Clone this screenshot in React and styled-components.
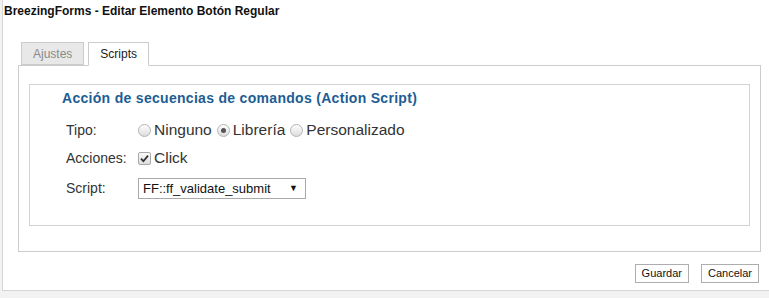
import React from 'react';
import styled, { createGlobalStyle } from 'styled-components';

const GlobalStyle = createGlobalStyle`
    html, body {
        margin: 0;
        padding: 0;
        background-color: #f2f2f2;
        font-family: "Liberation Sans", Arial, sans-serif;
    }
`

const Frame = styled.div`
    margin-left: 2px;
    height: 291px;
    box-sizing: border-box;
    background-color: #ffffff;
    border-left: 1px solid #d6d6d6;
    border-bottom: 1px solid #d6d6d6;
    overflow: hidden;
`

const Title = styled.h1`
    margin: 0;
    padding: 4px 0 0 1px;
    font-size: 12px;
    line-height: 14px;
    font-weight: bold;
    color: #111111;
`

const Body = styled.div`
    padding: 0 8px 0 15px;
`

const TabBar = styled.div`
    display: flex;
    gap: 4px;
    margin: 24px 0 0 3px;
    position: relative;
    z-index: 1;
`

const Tab = styled.div`
    box-sizing: border-box;
    padding: 0 11px;
    line-height: 22px;
    font-size: 12px;
    border: 1px solid #cccccc;
    border-bottom-color: ${props => props.active ? '#ffffff' : '#cccccc'};
    margin-bottom: ${props => props.active ? '-1px' : '0'};
    height: ${props => props.active ? '24px' : '23px'};
    background-color: ${props => props.active ? '#ffffff' : '#e8e8e8'};
    color: ${props => props.active ? '#222222' : '#8a8a8a'};
`

const Panel = styled.div`
    border: 1px solid #cccccc;
    padding: 18px 10px 25px 10px;
`

const Fieldset = styled.div`
    border: 1px solid #d2d2d2;
    padding: 3px 0 24px 32px;
`

const Legend = styled.div`
    font-size: 14px;
    line-height: 20px;
    font-weight: bold;
    letter-spacing: 0.3px;
    color: #1d5d94;
`

const Row = styled.div`
    display: flex;
    align-items: center;
    height: 26px;
    margin-top: ${props => props.top}px;
    margin-left: 4px;
`

const Label = styled.div`
    width: 72px;
    font-size: 14px;
    color: #333333;
`

const Options = styled.div`
    display: flex;
    align-items: center;
    gap: 5px;
`

const Option = styled.label`
    display: flex;
    align-items: center;
    gap: 3px;
    font-size: 15.5px;
    color: #333333;
`

const Radio = styled.span`
    width: 13px;
    height: 13px;
    box-sizing: border-box;
    border-radius: 50%;
    border: 1px solid #b4b4b4;
    background: linear-gradient(#ffffff, #dcdcdc);
    display: flex;
    align-items: center;
    justify-content: center;

    &::after {
        content: '';
        width: 5px;
        height: 5px;
        border-radius: 50%;
        background-color: ${props => props.checked ? '#555555' : 'transparent'};
    }
`

const Checkbox = styled.span`
    width: 13px;
    height: 13px;
    box-sizing: border-box;
    border: 1px solid #a8a8a8;
    border-radius: 2px;
    background: linear-gradient(#fafafa, #dedede);
    display: flex;
    align-items: center;
    justify-content: center;
`

const Select = styled.div`
    width: 168px;
    height: 21px;
    box-sizing: border-box;
    border: 1px solid #a9a9a9;
    display: flex;
    align-items: center;
    justify-content: space-between;
    padding: 0 7px 0 4px;
    font-size: 13px;
    color: #111111;
    background-color: #ffffff;
`

const Arrow = styled.span`
    font-size: 9px;
    color: #111111;
`

const Actions = styled.div`
    display: flex;
    justify-content: flex-end;
    gap: 12px;
    margin-top: 12px;
    padding-right: 2px;
`

const Button = styled.button`
    height: 19px;
    box-sizing: border-box;
    padding: 0 6px;
    border: 1px solid #adadad;
    background-color: #ffffff;
    font-family: "Liberation Sans", Arial, sans-serif;
    font-size: 11px;
    line-height: 17px;
    color: #111111;
`

export default function App() {
    return (
        <>
            <GlobalStyle />
            <Frame>
                <Title>BreezingForms - Editar Elemento Botón Regular</Title>
                <Body>
                    <TabBar>
                        <Tab>Ajustes</Tab>
                        <Tab active>Scripts</Tab>
                    </TabBar>
                    <Panel>
                        <Fieldset>
                            <Legend>Acción de secuencias de comandos (Action Script)</Legend>
                            <Row top={9}>
                                <Label>Tipo:</Label>
                                <Options>
                                    <Option><Radio />Ninguno</Option>
                                    <Option><Radio checked />Librería</Option>
                                    <Option><Radio />Personalizado</Option>
                                </Options>
                            </Row>
                            <Row top={2}>
                                <Label>Acciones:</Label>
                                <Option>
                                    <Checkbox>
                                        <svg width="9" height="9" viewBox="0 0 9 9">
                                            <path d="M1 4.6 L3.4 7.2 L8 1.6" fill="none" stroke="#333" strokeWidth="1.8" />
                                        </svg>
                                    </Checkbox>
                                    Click
                                </Option>
                            </Row>
                            <Row top={4}>
                                <Label>Script:</Label>
                                <Select>
                                    <span>FF::ff_validate_submit</span>
                                    <Arrow>▼</Arrow>
                                </Select>
                            </Row>
                        </Fieldset>
                    </Panel>
                    <Actions>
                        <Button>Guardar</Button>
                        <Button>Cancelar</Button>
                    </Actions>
                </Body>
            </Frame>
        </>
    );
}
